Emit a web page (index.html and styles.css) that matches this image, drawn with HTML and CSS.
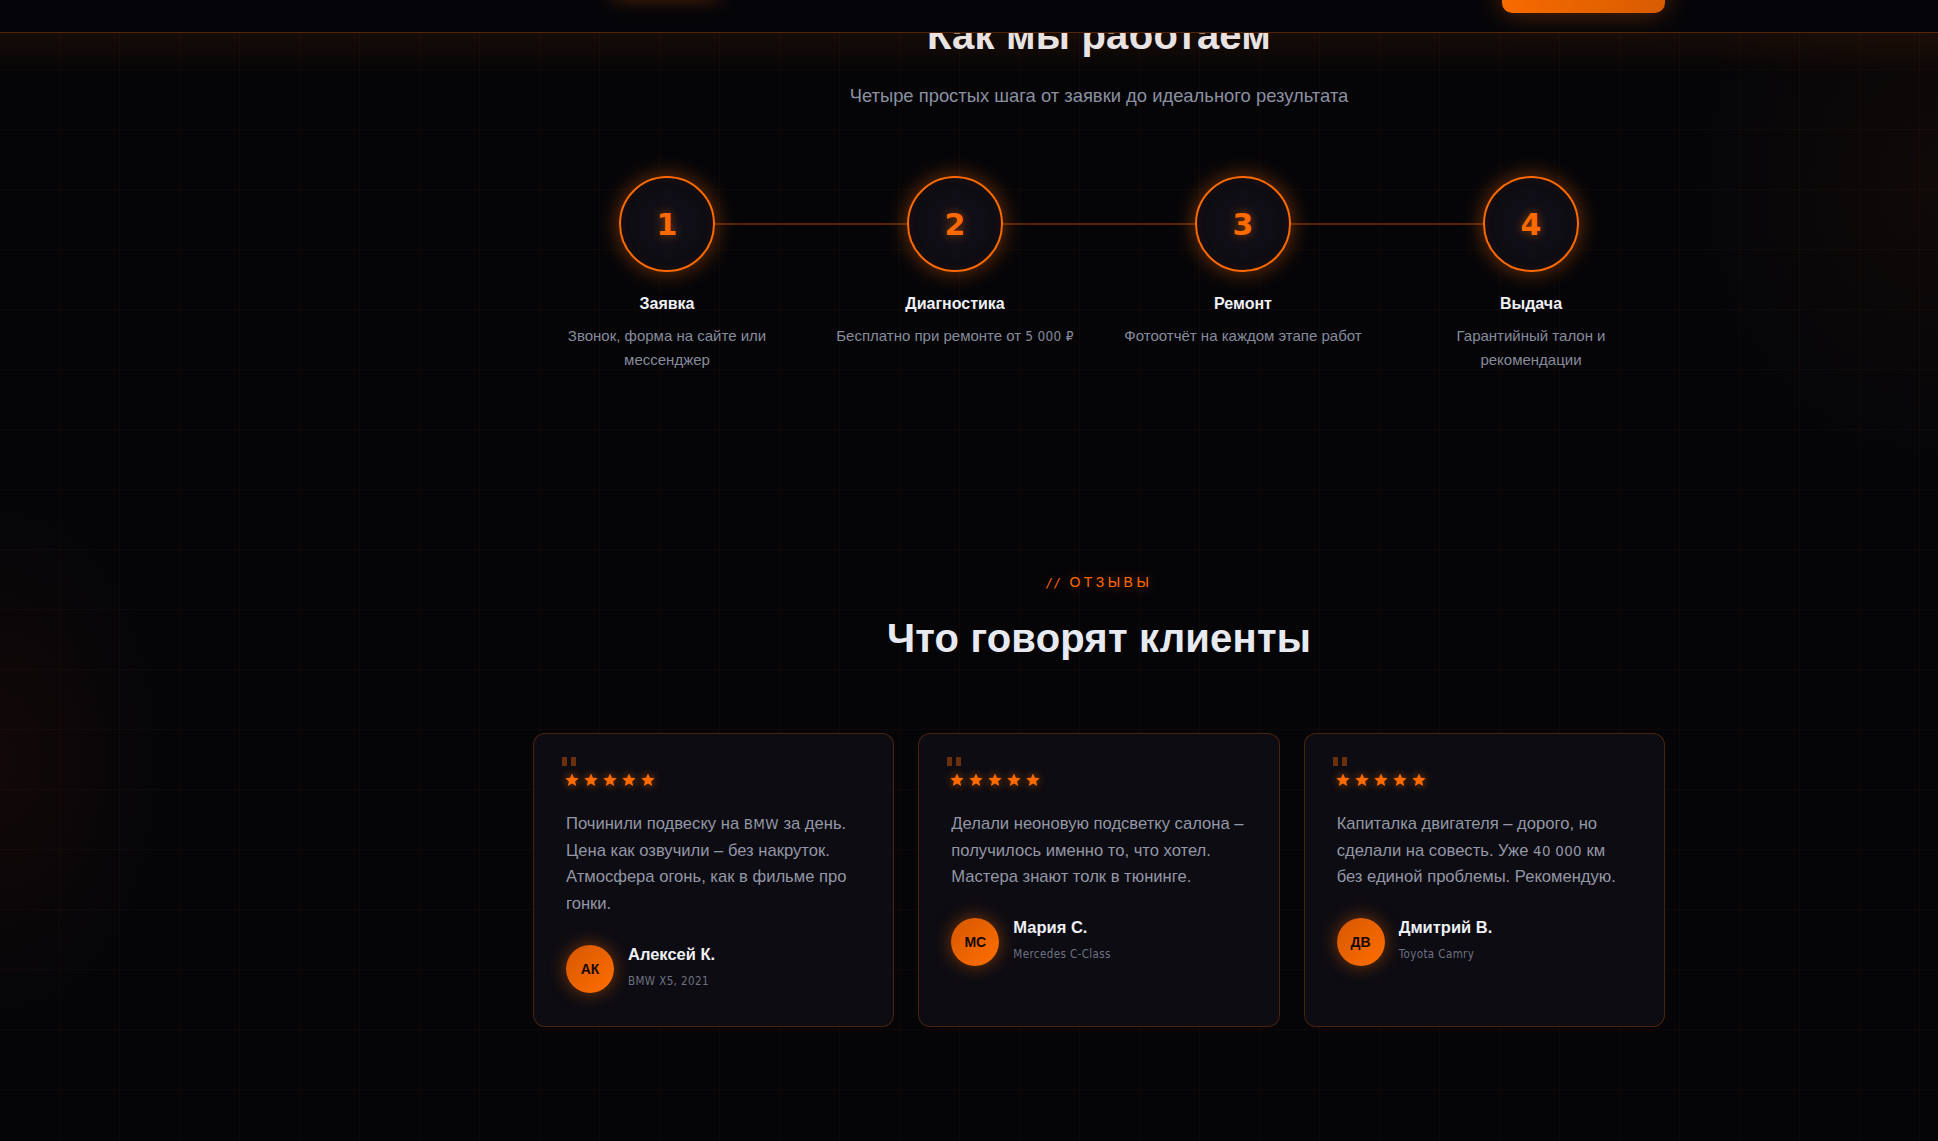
FILE: index.html
```html
<!DOCTYPE html>
<html lang="ru">
<head>
<meta charset="utf-8">
<title>Как мы работаем — Отзывы</title>
<link rel="stylesheet" href="styles.css">
</head>
<body>
<header class="topbar">
  <div class="topbar-inner">
    <div class="nav-glow"></div>
    <a class="cta" href="#" aria-label="Записаться"></a>
  </div>
</header>

<main class="main">
  <section class="process">
    <h2 class="section-title">Как мы работаем</h2>
    <p class="section-sub">Четыре простых шага от заявки до идеального результата</p>

    <div class="steps">
      <div class="step">
        <div class="step-num">1</div>
        <h3 class="step-title">Заявка</h3>
        <p class="step-desc">Звонок, форма на сайте или мессенджер</p>
      </div>
      <div class="step">
        <div class="step-num">2</div>
        <h3 class="step-title">Диагностика</h3>
        <p class="step-desc">Бесплатно при ремонте от <span class="lat">5 000 ₽</span></p>
      </div>
      <div class="step">
        <div class="step-num">3</div>
        <h3 class="step-title">Ремонт</h3>
        <p class="step-desc">Фотоотчёт на каждом этапе работ</p>
      </div>
      <div class="step">
        <div class="step-num">4</div>
        <h3 class="step-title">Выдача</h3>
        <p class="step-desc">Гарантийный талон и рекомендации</p>
      </div>
    </div>
  </section>

  <section class="reviews">
    <div class="eyebrow"><span class="slashes">//</span> ОТЗЫВЫ</div>
    <h2 class="section-title">Что говорят клиенты</h2>

    <div class="cards">
      <article class="card">
        <span class="quote"></span>
        <div class="stars">
          <svg viewBox="0 0 24 24"><path d="M12 .8l3.3 7.5 8.2.7-6.2 5.4 1.9 8L12 18.2l-7.2 4.2 1.9-8L.5 9l8.2-.7z"/></svg>
          <svg viewBox="0 0 24 24"><path d="M12 .8l3.3 7.5 8.2.7-6.2 5.4 1.9 8L12 18.2l-7.2 4.2 1.9-8L.5 9l8.2-.7z"/></svg>
          <svg viewBox="0 0 24 24"><path d="M12 .8l3.3 7.5 8.2.7-6.2 5.4 1.9 8L12 18.2l-7.2 4.2 1.9-8L.5 9l8.2-.7z"/></svg>
          <svg viewBox="0 0 24 24"><path d="M12 .8l3.3 7.5 8.2.7-6.2 5.4 1.9 8L12 18.2l-7.2 4.2 1.9-8L.5 9l8.2-.7z"/></svg>
          <svg viewBox="0 0 24 24"><path d="M12 .8l3.3 7.5 8.2.7-6.2 5.4 1.9 8L12 18.2l-7.2 4.2 1.9-8L.5 9l8.2-.7z"/></svg>
        </div>
        <p class="card-text">Починили подвеску на <span class="lat">BMW</span> за день. Цена как озвучили – без накруток. Атмосфера огонь, как в фильме про гонки.</p>
        <div class="author">
          <div class="avatar">АК</div>
          <div class="who">
            <div class="name">Алексей К.</div>
            <div class="car">BMW X5, 2021</div>
          </div>
        </div>
      </article>

      <article class="card">
        <span class="quote"></span>
        <div class="stars">
          <svg viewBox="0 0 24 24"><path d="M12 .8l3.3 7.5 8.2.7-6.2 5.4 1.9 8L12 18.2l-7.2 4.2 1.9-8L.5 9l8.2-.7z"/></svg>
          <svg viewBox="0 0 24 24"><path d="M12 .8l3.3 7.5 8.2.7-6.2 5.4 1.9 8L12 18.2l-7.2 4.2 1.9-8L.5 9l8.2-.7z"/></svg>
          <svg viewBox="0 0 24 24"><path d="M12 .8l3.3 7.5 8.2.7-6.2 5.4 1.9 8L12 18.2l-7.2 4.2 1.9-8L.5 9l8.2-.7z"/></svg>
          <svg viewBox="0 0 24 24"><path d="M12 .8l3.3 7.5 8.2.7-6.2 5.4 1.9 8L12 18.2l-7.2 4.2 1.9-8L.5 9l8.2-.7z"/></svg>
          <svg viewBox="0 0 24 24"><path d="M12 .8l3.3 7.5 8.2.7-6.2 5.4 1.9 8L12 18.2l-7.2 4.2 1.9-8L.5 9l8.2-.7z"/></svg>
        </div>
        <p class="card-text">Делали неоновую подсветку салона – получилось именно то, что хотел. Мастера знают толк в тюнинге.</p>
        <div class="author">
          <div class="avatar">МС</div>
          <div class="who">
            <div class="name">Мария С.</div>
            <div class="car">Mercedes C-Class</div>
          </div>
        </div>
      </article>

      <article class="card">
        <span class="quote"></span>
        <div class="stars">
          <svg viewBox="0 0 24 24"><path d="M12 .8l3.3 7.5 8.2.7-6.2 5.4 1.9 8L12 18.2l-7.2 4.2 1.9-8L.5 9l8.2-.7z"/></svg>
          <svg viewBox="0 0 24 24"><path d="M12 .8l3.3 7.5 8.2.7-6.2 5.4 1.9 8L12 18.2l-7.2 4.2 1.9-8L.5 9l8.2-.7z"/></svg>
          <svg viewBox="0 0 24 24"><path d="M12 .8l3.3 7.5 8.2.7-6.2 5.4 1.9 8L12 18.2l-7.2 4.2 1.9-8L.5 9l8.2-.7z"/></svg>
          <svg viewBox="0 0 24 24"><path d="M12 .8l3.3 7.5 8.2.7-6.2 5.4 1.9 8L12 18.2l-7.2 4.2 1.9-8L.5 9l8.2-.7z"/></svg>
          <svg viewBox="0 0 24 24"><path d="M12 .8l3.3 7.5 8.2.7-6.2 5.4 1.9 8L12 18.2l-7.2 4.2 1.9-8L.5 9l8.2-.7z"/></svg>
        </div>
        <p class="card-text">Капиталка двигателя – дорого, но сделали на совесть. Уже <span class="lat">40 000</span> км без единой проблемы. Рекомендую.</p>
        <div class="author">
          <div class="avatar">ДВ</div>
          <div class="who">
            <div class="name">Дмитрий В.</div>
            <div class="car">Toyota Camry</div>
          </div>
        </div>
      </article>
    </div>
  </section>
</main>
</body>
</html>
```

FILE: styles.css
```css
* { box-sizing: border-box; }

html, body { height: 100%; }

body {
  margin: 0;
  min-height: 100vh;
  overflow: hidden;
  color: #e6e8ef;
  font-family: "Liberation Sans", Arial, sans-serif;
  background-color: #050508;
  background-image:
    radial-gradient(ellipse 240px 380px at 0px 760px, rgba(255, 60, 0, 0.05), transparent 70%),
    radial-gradient(ellipse 360px 420px at 1938px 180px, rgba(255, 106, 0, 0.045), transparent 70%),
    linear-gradient(90deg, rgba(255, 106, 0, 0.035) 1px, transparent 1px),
    linear-gradient(0deg, rgba(255, 106, 0, 0.035) 1px, transparent 1px);
  background-size: auto, auto, 60px 60px, 60px 60px;
  background-position: 0 0, 0 0, -1px 0, 0 10px;
  background-repeat: no-repeat, no-repeat, repeat, repeat;
}

/* ---------- Header ---------- */
.topbar {
  position: fixed;
  top: 0;
  left: 0;
  right: 0;
  height: 33px;
  z-index: 10;
  background: #050509;
  border-bottom: 1px solid rgba(255, 106, 0, 0.32);
}

.topbar::after {
  content: "";
  position: absolute;
  left: 0;
  right: 0;
  top: 33px;
  height: 42px;
  background: linear-gradient(180deg, rgba(255, 106, 0, 0.075), rgba(255, 106, 0, 0));
  pointer-events: none;
}

.topbar-inner {
  width: 1132px;
  height: 100%;
  margin-left: 533px;
  display: flex;
  justify-content: space-between;
  align-items: flex-start;
}

.nav-glow {
  margin-left: 78px;
  margin-top: -18px;
  width: 110px;
  height: 16px;
  border-radius: 8px;
  background: rgba(255, 106, 0, 0.35);
  filter: blur(10px);
}

.cta {
  display: block;
  width: 163px;
  height: 44px;
  margin-top: -31px;
  border-radius: 10px;
  background: linear-gradient(90deg, #f76a00, #d85c00);
  box-shadow: 0 0 26px rgba(255, 106, 0, 0.35);
  text-decoration: none;
}

/* ---------- Main ---------- */
.main {
  margin-left: 260px;
}

.process,
.reviews {
  width: 1132px;
  margin: 0 auto;
  text-align: center;
}

.process {
  padding-top: 11px;
  padding-bottom: 100px;
}

.reviews {
  padding-top: 100px;
}

.section-title {
  margin: 0;
  font-size: 40px;
  line-height: 48px;
  font-weight: 700;
  color: #e8eaf1;
  letter-spacing: 0.2px;
}

.section-sub {
  margin: 23px 0 0;
  font-size: 18.4px;
  line-height: 27px;
  color: #8b90a0;
}

/* ---------- Steps ---------- */
.steps {
  position: relative;
  margin-top: 67px;
  display: grid;
  grid-template-columns: repeat(4, 1fr);
  gap: 20px;
}

.steps::before {
  content: "";
  position: absolute;
  top: 47px;
  left: 134px;
  right: 134px;
  height: 2px;
  background: rgba(255, 106, 0, 0.32);
}

.step {
  position: relative;
  display: flex;
  flex-direction: column;
  align-items: center;
}

.step-num {
  width: 96px;
  height: 96px;
  border-radius: 50%;
  border: 2px solid #ff6a00;
  background: radial-gradient(circle at 50% 50%, #121119, #0b0a10);
  box-shadow: 0 0 22px rgba(255, 106, 0, 0.45), inset 0 0 12px rgba(255, 106, 0, 0.06);
  display: flex;
  align-items: center;
  justify-content: center;
  font-family: "DejaVu Sans", sans-serif;
  font-weight: 700;
  font-size: 30px;
  color: #ff6a00;
  text-shadow: 0 0 10px rgba(255, 106, 0, 0.5);
}

.step-title {
  margin: 21px 0 0;
  font-size: 16px;
  line-height: 22px;
  font-weight: 700;
  color: #eef0f5;
}

.step-desc {
  margin: 9px 0 0;
  max-width: 246px;
  font-size: 15px;
  line-height: 24px;
  color: #868b9b;
}

.lat {
  font-family: "DejaVu Sans Condensed", "DejaVu Sans", sans-serif;
  font-size: 0.9em;
  letter-spacing: 0.3px;
}

/* ---------- Reviews ---------- */
.eyebrow {
  font-size: 14px;
  line-height: 20px;
  letter-spacing: 3.5px;
  color: #ff6a00;
  text-shadow: 0 0 12px rgba(255, 106, 0, 0.45);
}

.slashes {
  font-family: "DejaVu Sans Mono", monospace;
  font-style: italic;
  font-size: 12px;
  letter-spacing: 1px;
}

.reviews .section-title {
  margin-top: 21px;
}

.cards {
  margin-top: 71px;
  display: grid;
  grid-template-columns: repeat(3, 1fr);
  gap: 24px;
  text-align: left;
}

.card {
  position: relative;
  padding: 39px 32px 33px;
  background: #0d0c12;
  border: 1px solid rgba(255, 106, 0, 0.26);
  border-radius: 12px;
}

.quote {
  position: absolute;
  left: 28px;
  top: 23px;
  width: 5px;
  height: 9px;
  background: #6a2f0c;
  box-shadow: 9px 0 0 #6a2f0c;
}

.stars {
  display: flex;
  gap: 5px;
  height: 14px;
  margin-left: -1px;
}

.stars svg {
  width: 14px;
  height: 14px;
  fill: #ff6a00;
  filter: drop-shadow(0 0 4px rgba(255, 106, 0, 0.6));
}

.card-text {
  margin: 24px 0 0;
  font-size: 16.6px;
  line-height: 26.7px;
  color: #9397a6;
}

.author {
  margin-top: 27px;
  display: flex;
  align-items: center;
  gap: 14px;
}

.avatar {
  flex: none;
  width: 48px;
  height: 48px;
  border-radius: 50%;
  background: linear-gradient(135deg, #d65800, #ff6e00);
  box-shadow: 0 0 18px rgba(255, 106, 0, 0.45);
  display: flex;
  align-items: center;
  justify-content: center;
  font-size: 14px;
  font-weight: 700;
  color: #140800;
}

.who {
  margin-top: -5px;
}

.name {
  font-size: 16.5px;
  line-height: 22px;
  font-weight: 700;
  color: #eef0f5;
}

.car {
  margin-top: 7px;
  font-family: "DejaVu Sans Condensed", "DejaVu Sans", sans-serif;
  font-size: 11.5px;
  line-height: 18px;
  letter-spacing: 0.4px;
  color: #6d7282;
}
```
